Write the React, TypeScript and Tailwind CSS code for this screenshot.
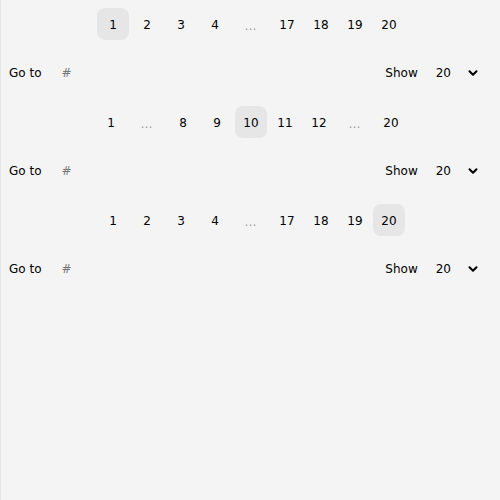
import { ChevronDown } from "lucide-react";

type Item = number | "...";

const rows: { items: Item[]; active: number }[] = [
  { items: [1, 2, 3, 4, "...", 17, 18, 19, 20], active: 1 },
  { items: [1, "...", 8, 9, 10, 11, 12, "...", 20], active: 10 },
  { items: [1, 2, 3, 4, "...", 17, 18, 19, 20], active: 20 },
];

function Pagination({ items, active }: { items: Item[]; active: number }) {
  return (
    <div className="flex justify-center gap-[2px]">
      {items.map((it, i) =>
        it === "..." ? (
          <span key={i} className="flex h-8 w-9 items-center justify-center pt-[3px] text-[#9a9a9a]">
            …
          </span>
        ) : (
          <button
            key={i}
            className={
              "flex h-8 w-8 items-center justify-center rounded-lg pt-[2px] pl-[1px] text-black " +
              (it === active ? "bg-[#e6e6e6]" : "")
            }
          >
            {it}
          </button>
        )
      )}
    </div>
  );
}

export default function App() {
  return (
    <div
      className="min-h-[500px] w-[500px] border-l border-[#e6e6e6] bg-[#f4f4f4] text-[12px] text-black"
      style={{ fontFamily: '"DejaVu Sans", sans-serif' }}
    >
      {rows.map((r, i) => (
        <div key={i} className="flex h-[98px] flex-col pt-2">
          <Pagination items={r.items} active={r.active} />
          <div className="mt-[17px] flex h-8 items-center justify-between pl-2 pr-[20px]">
            <div className="flex items-center">
              <span>Go to</span>
              <input
                placeholder="#"
                className="ml-[20px] w-10 bg-transparent text-[12px] outline-none placeholder:text-[#777]"
              />
            </div>
            <div className="flex items-center">
              <span>Show</span>
              <span className="ml-[18px]">20</span>
              <ChevronDown className="ml-[15px] h-[14px] w-[14px]" strokeWidth={3.5} />
            </div>
          </div>
        </div>
      ))}
    </div>
  );
}
